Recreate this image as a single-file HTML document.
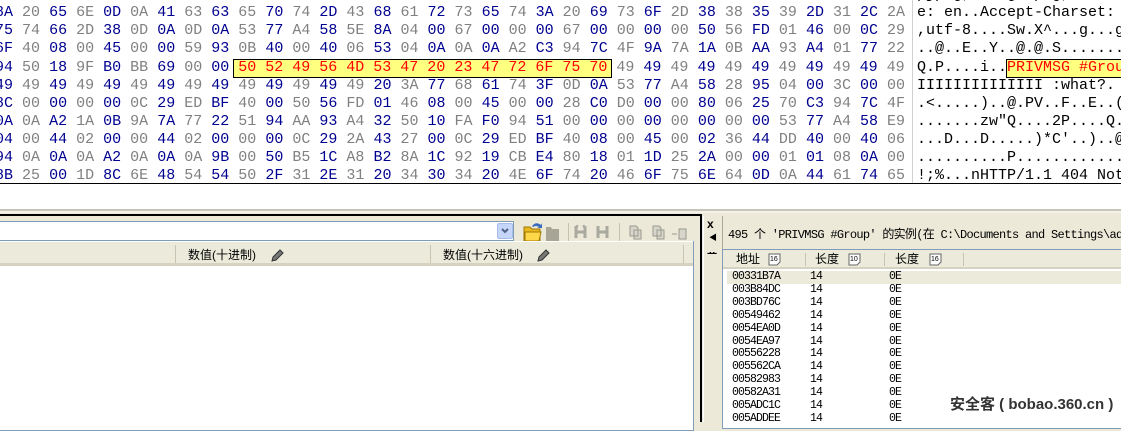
<!DOCTYPE html>
<html><head><meta charset="utf-8"><style>
*{margin:0;padding:0;box-sizing:border-box}
body{width:1121px;height:422px;overflow:hidden;background:#ece9d8;position:relative;font-family:"Liberation Mono","Noto Sans CJK SC",monospace}
.hex{position:absolute;left:0;top:0;width:1121px;height:184px;background:#fff;overflow:hidden}
.r{position:absolute;left:-5px;font-size:15px;line-height:18px;white-space:pre;font-family:"Liberation Mono",monospace}
.r b{font-weight:normal;color:#000090}
.r i{font-style:normal;color:#808080}
.r u{text-decoration:none;color:#ff0000}
.a{position:absolute;left:917px;font-size:15px;line-height:18px;white-space:pre;color:#000}
.a u{text-decoration:none;color:#f00}
.abs{position:absolute}
.cjk{font-family:"Liberation Sans","Noto Sans CJK SC",sans-serif}
.lr{position:absolute;font-size:11.5px;line-height:13px;white-space:pre;color:#000;letter-spacing:-0.9px;font-family:"Liberation Mono","Noto Sans CJK SC",monospace}
</style></head><body>
<div class="hex">
<div class="abs" style="left:233px;top:59px;width:379px;height:19px;background:#ffff80;border:1px solid #000"></div>
<div class="abs" style="left:1006px;top:59px;width:120px;height:19px;background:#ffff80;border:1px solid #000"></div>
<div class="abs" style="left:912px;top:0;width:1px;height:184px;background:#d0d0d0"></div>
<div class="r" style="top:-14px"><b>2F</b> <i>27</i> <b>2F</b> <i>2A</i> <b>2C</b> <i>20</i> <b>69</b> <i>6D</i> <b>61</b> <i>67</i> <b>65</b> <i>2F</i> <b>70</b> <i>6E</i> <b>67</b> <i>2C</i> <b>20</b> <i>2A</i> <b>2F</b> <i>2A</i> <b>0D</b> <i>0A</i> <b>41</b> <i>63</i> <b>63</b> <i>65</i> <b>70</b> <i>74</i> <b>2D</b> <i>4C</i> <b>61</b> <i>6E</i> <b>67</b> <i>75</i></div>
<div class="r" style="top:4px"><b>8A</b> <i>20</i> <b>65</b> <i>6E</i> <b>0D</b> <i>0A</i> <b>41</b> <i>63</i> <b>63</b> <i>65</i> <b>70</b> <i>74</i> <b>2D</b> <i>43</i> <b>68</b> <i>61</i> <b>72</b> <i>73</i> <b>65</b> <i>74</i> <b>3A</b> <i>20</i> <b>69</b> <i>73</i> <b>6F</b> <i>2D</i> <b>38</b> <i>38</i> <b>35</b> <i>39</i> <b>2D</b> <i>31</i> <b>2C</b> <i>2A</i></div>
<div class="r" style="top:22px"><b>75</b> <i>74</i> <b>66</b> <i>2D</i> <b>38</b> <i>0D</i> <b>0A</b> <i>0D</i> <b>0A</b> <i>53</i> <b>77</b> <i>A4</i> <b>58</b> <i>5E</i> <b>8A</b> <i>04</i> <b>00</b> <i>67</i> <b>00</b> <i>00</i> <b>00</b> <i>67</i> <b>00</b> <i>00</i> <b>00</b> <i>00</i> <b>50</b> <i>56</i> <b>FD</b> <i>01</i> <b>46</b> <i>00</i> <b>0C</b> <i>29</i></div>
<div class="r" style="top:40px"><b>6F</b> <i>40</i> <b>08</b> <i>00</i> <b>45</b> <i>00</i> <b>00</b> <i>59</i> <b>93</b> <i>0B</i> <b>40</b> <i>00</i> <b>40</b> <i>06</i> <b>53</b> <i>04</i> <b>0A</b> <i>0A</i> <b>0A</b> <i>A2</i> <b>C3</b> <i>94</i> <b>7C</b> <i>4F</i> <b>9A</b> <i>7A</i> <b>1A</b> <i>0B</i> <b>AA</b> <i>93</i> <b>A4</b> <i>01</i> <b>77</b> <i>22</i></div>
<div class="r" style="top:59px"><b>94</b> <i>50</i> <b>18</b> <i>9F</i> <b>B0</b> <i>BB</i> <b>69</b> <i>00</i> <b>00</b> <u>50 52 49 56 4D 53 47 20 23 47 72 6F 75 70</u> <i>49</i> <b>49</b> <i>49</i> <b>49</b> <i>49</i> <b>49</b> <i>49</i> <b>49</b> <i>49</i> <b>49</b> <i>49</i></div>
<div class="r" style="top:77px"><b>49</b> <i>49</i> <b>49</b> <i>49</i> <b>49</b> <i>49</i> <b>49</b> <i>49</i> <b>49</b> <i>49</i> <b>49</b> <i>49</i> <b>49</b> <i>49</i> <b>20</b> <i>3A</i> <b>77</b> <i>68</i> <b>61</b> <i>74</i> <b>3F</b> <i>0D</i> <b>0A</b> <i>53</i> <b>77</b> <i>A4</i> <b>58</b> <i>28</i> <b>95</b> <i>04</i> <b>00</b> <i>3C</i> <b>00</b> <i>00</i></div>
<div class="r" style="top:95px"><b>8C</b> <i>00</i> <b>00</b> <i>00</i> <b>00</b> <i>0C</i> <b>29</b> <i>ED</i> <b>BF</b> <i>40</i> <b>00</b> <i>50</i> <b>56</b> <i>FD</i> <b>01</b> <i>46</i> <b>08</b> <i>00</i> <b>45</b> <i>00</i> <b>00</b> <i>28</i> <b>C0</b> <i>D0</i> <b>00</b> <i>00</i> <b>80</b> <i>06</i> <b>25</b> <i>70</i> <b>C3</b> <i>94</i> <b>7C</b> <i>4F</i></div>
<div class="r" style="top:113px"><b>0A</b> <i>0A</i> <b>A2</b> <i>1A</i> <b>0B</b> <i>9A</i> <b>7A</b> <i>77</i> <b>22</b> <i>51</i> <b>94</b> <i>AA</i> <b>93</b> <i>A4</i> <b>32</b> <i>50</i> <b>10</b> <i>FA</i> <b>F0</b> <i>94</i> <b>51</b> <i>00</i> <b>00</b> <i>00</i> <b>00</b> <i>00</i> <b>00</b> <i>00</i> <b>00</b> <i>53</i> <b>77</b> <i>A4</i> <b>58</b> <i>E9</i></div>
<div class="r" style="top:131px"><b>04</b> <i>00</i> <b>44</b> <i>02</i> <b>00</b> <i>00</i> <b>44</b> <i>02</i> <b>00</b> <i>00</i> <b>00</b> <i>0C</i> <b>29</b> <i>2A</i> <b>43</b> <i>27</i> <b>00</b> <i>0C</i> <b>29</b> <i>ED</i> <b>BF</b> <i>40</i> <b>08</b> <i>00</i> <b>45</b> <i>00</i> <b>02</b> <i>36</i> <b>44</b> <i>DD</i> <b>40</b> <i>00</i> <b>40</b> <i>06</i></div>
<div class="r" style="top:149px"><b>94</b> <i>0A</i> <b>0A</b> <i>0A</i> <b>A2</b> <i>0A</i> <b>0A</b> <i>0A</i> <b>9B</b> <i>00</i> <b>50</b> <i>B5</i> <b>1C</b> <i>A8</i> <b>B2</b> <i>8A</i> <b>1C</b> <i>92</i> <b>19</b> <i>CB</i> <b>E4</b> <i>80</i> <b>18</b> <i>01</i> <b>1D</b> <i>25</i> <b>2A</b> <i>00</i> <b>00</b> <i>01</i> <b>01</b> <i>08</i> <b>0A</b> <i>00</i></div>
<div class="r" style="top:167px"><b>8B</b> <i>25</i> <b>00</b> <i>1D</i> <b>8C</b> <i>6E</i> <b>48</b> <i>54</i> <b>54</b> <i>50</i> <b>2F</b> <i>31</i> <b>2E</b> <i>31</i> <b>20</b> <i>34</i> <b>30</b> <i>34</i> <b>20</b> <i>4E</i> <b>6F</b> <i>74</i> <b>20</b> <i>46</i> <b>6F</b> <i>75</i> <b>6E</b> <i>64</i> <b>0D</b> <i>0A</i> <b>44</b> <i>61</i> <b>74</b> <i>65</i></div>
<div class="r" style="top:185px"><b>20</b> <i>57</i> <b>65</b> <i>64</i> <b>2C</b> <i>20</i> <b>31</b> <i>35</i> <b>20</b> <i>46</i> <b>65</b> <i>62</i> <b>20</b> <i>32</i> <b>30</b> <i>31</i> <b>37</b> <i>20</i> <b>31</b> <i>35</i> <b>3A</b> <i>34</i> <b>31</b> <i>3A</i> <b>32</b> <i>33</i> <b>20</b> <i>47</i> <b>4D</b> <i>54</i> <b>0D</b> <i>0A</i> <b>53</b> <i>65</i></div>
<div class="a" style="top:-14px">pjpeg, image/png, */*..</div>
<div class="a" style="top:4px">e: en..Accept-Charset: </div>
<div class="a" style="top:22px">,utf-8....Sw.X^...g...g</div>
<div class="a" style="top:40px">..@..E..Y..@.@.S.......</div>
<div class="a" style="top:59px">Q.P....i..<u>PRIVMSG #Grou</u></div>
<div class="a" style="top:77px">IIIIIIIIIIIIII :what?.</div>
<div class="a" style="top:95px">.&lt;.....)..@.PV..F..E..(</div>
<div class="a" style="top:113px">.......zw"Q....2P....Q.</div>
<div class="a" style="top:131px">...D...D.....)*C'..)..@</div>
<div class="a" style="top:149px">..........P............</div>
<div class="a" style="top:167px">!;%...nHTTP/1.1 404 Not</div>
<div class="a" style="top:185px"> Wed, 15 Feb 2017 15:4</div>
</div>
<div class="abs" style="left:0;top:183px;width:1121px;height:1px;background:#000"></div>
<div class="abs" style="left:0;top:184px;width:1121px;height:25px;background:#fff"></div>
<div class="abs" style="left:0;top:209px;width:1121px;height:2px;background:#c8c5b8"></div>
<div class="abs" style="left:0;top:211px;width:1121px;height:2px;background:#f4f2ea"></div>
<div class="abs" style="left:0;top:214px;width:701px;height:2px;background:#000"></div>
<div class="abs" style="left:700px;top:214px;width:2px;height:208px;background:#000"></div>
<!-- combobox -->
<div class="abs" style="left:-2px;top:221px;width:516px;height:20px;background:#fff;border:1px solid #7f9db9"></div>
<div class="abs" style="left:497px;top:223px;width:16px;height:16px;background:#c6d6fb;border:1px solid #a6bcea;border-radius:2px"></div>
<svg class="abs" style="left:500px;top:226px" width="10" height="10"><path d="M2 3 L5 6 L8 3" stroke="#4d6185" stroke-width="2" fill="none"/></svg>
<!-- toolbar -->
<svg class="abs" style="left:518px;top:219px" width="175" height="24">
<path d="M6 8 h6 l2 2 h8 v12 h-16z" fill="#e8b820" stroke="#a07800"/><path d="M7 13 h16 l-2 9 h-14z" fill="#ffd84a" stroke="#a07800"/><path d="M14 7 q4 -5 9 -1 l1 -2 v5 h-5 l2 -1 q-3 -2 -6 0z" fill="#3a6bc0"/>
<path d="M28 8 h5 l1 2 h7 v12 h-13z" fill="#a7a696"/>
<rect x="50" y="4" width="1" height="18" fill="#c5c2b2"/>
<path d="M58 7 v12 M67 7 v12 M58 13 h9 M60 8 l-2 -1 M65 8 l2 -1" stroke="#aaa9a0" stroke-width="3" fill="none"/>
<path d="M80 7 v12 M89 7 v12 M80 13 h9" stroke="#aaa9a0" stroke-width="3" fill="none"/>
<rect x="101" y="4" width="1" height="18" fill="#c5c2b2"/>
<path d="M112 7 h6 l2 2 v8 h-8z M116 11 h7 v9 h-7z" fill="#d8d6cc" stroke="#9a998e"/>
<path d="M135 7 h6 l2 2 v8 h-8z M139 11 h7 v9 h-7z" fill="#d8d6cc" stroke="#9a998e"/>
<path d="M161 10 h7 v10 h-7z" fill="#d8d6cc" stroke="#9a998e"/><path d="M154 15 h5" stroke="#9a998e"/>
</svg>
<!-- left list -->
<div class="abs" style="left:-2px;top:241px;width:696px;height:190px;background:#fff;border:1px solid #7f9db9;border-top:none"></div>
<div class="abs" style="left:0;top:242px;width:693px;height:24px;background:#ebeadb;border-bottom:3px solid #d6d2c2"></div>
<div class="abs" style="left:175px;top:245px;width:1px;height:18px;background:#c7c5b2"></div>
<div class="abs" style="left:430px;top:245px;width:1px;height:18px;background:#c7c5b2"></div>
<div class="abs" style="left:683px;top:245px;width:1px;height:18px;background:#c7c5b2"></div>
<div class="abs cjk" style="left:188px;top:248px;font-size:12px;line-height:15px">数值(十进制)</div>
<div class="abs cjk" style="left:443px;top:248px;font-size:12px;line-height:15px">数值(十六进制)</div>
<svg class="abs" style="left:270px;top:249px" width="14" height="14"><path d="M2 12 l1 -4 l7 -7 l3 3 l-7 7z" fill="#777" stroke="#333"/></svg>
<svg class="abs" style="left:536px;top:249px" width="14" height="14"><path d="M2 12 l1 -4 l7 -7 l3 3 l-7 7z" fill="#777" stroke="#333"/></svg>
<!-- side strip -->
<div class="abs" style="left:703px;top:216px;width:20px;height:206px;border-left:1px solid #fff;border-right:1px solid #aca899"></div>
<div class="abs" style="left:707px;top:217px;font-size:12px;font-weight:bold;font-family:'Liberation Sans',sans-serif">x</div>
<div class="abs" style="left:709px;top:232px;font-size:8px">◀</div>
<div class="abs" style="left:707px;top:245px;font-size:11px;font-weight:bold">ᅭ</div>
<div class="abs" style="left:722px;top:216px;width:1px;height:206px;background:#aca899"></div>
<!-- right panel -->
<div class="lr" style="left:728px;top:229px;font-size:12px;letter-spacing:-0.7px">495 个 'PRIVMSG #Group' 的实例(在 C:\Documents and Settings\adm\桌</div>
<div class="abs" style="left:722px;top:249px;width:410px;height:180px;background:#fff;border:1px solid #7f9db9"></div>
<div class="abs" style="left:723px;top:250px;width:398px;height:19px;background:#ebeadb;border-bottom:2px solid #d6d2c2"></div>
<div class="abs" style="left:805px;top:253px;width:1px;height:13px;background:#c7c5b2"></div>
<div class="abs" style="left:884px;top:253px;width:1px;height:13px;background:#c7c5b2"></div>
<div class="abs" style="left:963px;top:253px;width:1px;height:13px;background:#c7c5b2"></div>
<div class="abs cjk" style="left:736px;top:252px;font-size:12px;line-height:15px">地址</div>
<div class="abs cjk" style="left:815px;top:252px;font-size:12px;line-height:15px">长度</div>
<div class="abs cjk" style="left:895px;top:252px;font-size:12px;line-height:15px">长度</div>
<svg class="abs" style="left:768px;top:253px" width="13" height="13"><path d="M1 1 h11 v8 l-3 3 h-8z" fill="#fff" stroke="#666"/><text x="2" y="8" font-size="7" font-family="Liberation Sans">16</text></svg>
<svg class="abs" style="left:848px;top:253px" width="13" height="13"><path d="M1 1 h11 v8 l-3 3 h-8z" fill="#fff" stroke="#666"/><text x="2" y="8" font-size="7" font-family="Liberation Sans">10</text></svg>
<svg class="abs" style="left:929px;top:253px" width="13" height="13"><path d="M1 1 h11 v8 l-3 3 h-8z" fill="#fff" stroke="#666"/><text x="2" y="8" font-size="7" font-family="Liberation Sans">16</text></svg>
<div class="abs" style="left:727px;top:271px;width:394px;height:13px;background:#ebeadb"></div>
<div class="lr" style="left:732px;top:271px;line-height:12.9px">00331B7A
003B84DC
003BD76C
00549462
0054EA0D
0054EA97
00556228
005562CA
00582983
00582A31
005ADC1C
005ADDEE</div>
<div class="lr" style="left:810px;top:271px;line-height:12.9px">14
14
14
14
14
14
14
14
14
14
14
14</div>
<div class="lr" style="left:889px;top:271px;line-height:12.9px">0E
0E
0E
0E
0E
0E
0E
0E
0E
0E
0E
0E</div>
<div class="abs cjk" style="left:950px;top:396px;font-size:15px;line-height:18px;font-weight:bold;color:#333;text-shadow:1px 1px 0 #fff,-1px -1px 0 #fff">安全客 ( bobao.360.cn )</div>
</body></html>
